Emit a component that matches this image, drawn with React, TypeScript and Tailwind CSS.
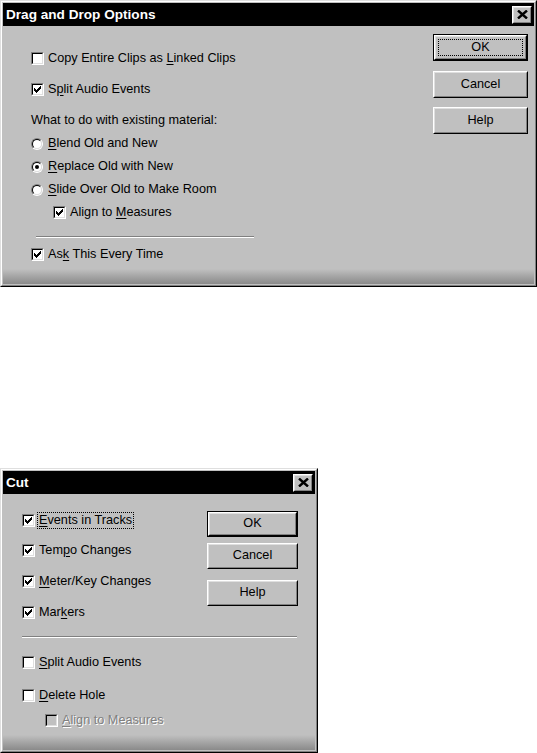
import React from "react";

const font = "font-['Liberation_Sans',Arial,sans-serif]";

const CHECK = ["......X", ".....XX", "X...XXX", "XX.XXX.", "XXXXX..", ".XXX...", "..X...."];

function CheckMark({ color }: { color: string }) {
  return (
    <svg width="9" height="9" viewBox="0 0 9 9" shapeRendering="crispEdges" className="block">
      {CHECK.map((row, y) =>
        row.split("").map((c, x) =>
          c === "X" ? <rect key={`${x}-${y}`} x={x + 1} y={y + 1} width="1" height="1" fill={color} /> : null,
        ),
      )}
    </svg>
  );
}

function Check({ checked, disabled }: { checked?: boolean; disabled?: boolean }) {
  return (
    <span className="block w-[13px] h-[13px] shrink-0 border border-t-[#808080] border-l-[#808080] border-r-white border-b-white">
      <span
        className={`block w-full h-full border border-t-black border-l-black border-r-[#dfdfdf] border-b-[#dfdfdf] ${
          disabled ? "bg-[#c0c0c0]" : "bg-white"
        }`}
      >
        {checked && <CheckMark color="#000" />}
      </span>
    </span>
  );
}

function Radio({ on }: { on?: boolean }) {
  return (
    <span className="flex w-[12px] h-[12px] shrink-0 rounded-full border border-t-[#808080] border-l-[#808080] border-r-white border-b-white">
      <span className="flex flex-1 items-center justify-center rounded-full border border-t-black border-l-black border-r-[#dfdfdf] border-b-[#dfdfdf] bg-white">
        {on && <span className="block w-[4px] h-[4px] rounded-full bg-black" />}
      </span>
    </span>
  );
}

function Label({ t, disabled, focus }: { t: [string, string, string]; disabled?: boolean; focus?: boolean }) {
  return (
    <span
      className={`text-[12.7px] leading-[15px] whitespace-nowrap ${
        disabled ? "text-[#808080] [text-shadow:1px_1px_0_#fff]" : "text-black"
      } ${focus ? "border border-dotted border-black px-[1px] -ml-[2px]" : ""}`}
    >
      {t[0]}
      <span className="underline underline-offset-[1.5px]">{t[1]}</span>
      {t[2]}
    </span>
  );
}

function CheckRow({
  t,
  checked,
  disabled,
  focus,
  className = "",
}: {
  t: [string, string, string];
  checked?: boolean;
  disabled?: boolean;
  focus?: boolean;
  className?: string;
}) {
  return (
    <div className={`flex items-center h-[23px] ${className}`}>
      <Check checked={checked} disabled={disabled} />
      <span className="ml-[4px] flex">
        <Label t={t} disabled={disabled} focus={focus} />
      </span>
    </div>
  );
}

function RadioRow({ t, on }: { t: [string, string, string]; on?: boolean }) {
  return (
    <div className="flex items-center h-[23px]">
      <span className="w-[13px] flex">
        <Radio on={on} />
      </span>
      <span className="ml-[4px] flex">
        <Label t={t} />
      </span>
    </div>
  );
}

function Btn({
  label,
  def,
  focus,
  size,
}: {
  label: string;
  def?: boolean;
  focus?: boolean;
  size: string;
}) {
  return (
    <div className={`${size} shrink-0 flex ${def ? "border border-black" : ""}`}>
      <div className="flex flex-1 border border-t-white border-l-white border-r-black border-b-black">
        <div className="flex flex-1 p-[2px] bg-[#c0c0c0] border border-t-[#dfdfdf] border-l-[#dfdfdf] border-r-[#808080] border-b-[#808080]">
          <div
            className={`flex flex-1 items-center justify-center text-[12.7px] text-black ${
              focus ? "border border-dotted border-black" : ""
            }`}
          >
            {label}
          </div>
        </div>
      </div>
    </div>
  );
}

function CloseBtn() {
  return (
    <div className="w-[20px] h-[18px] flex border border-t-white border-l-white border-r-black border-b-black">
      <div className="flex flex-1 items-center justify-center bg-[#c0c0c0] border border-t-[#dfdfdf] border-l-[#dfdfdf] border-r-[#808080] border-b-[#808080]">
        <svg width="11" height="9" viewBox="0 0 11 9" className="block">
          <path d="M1 0.5 L10 8.5 M10 0.5 L1 8.5" stroke="#000" strokeWidth="2.4" />
        </svg>
      </div>
    </div>
  );
}

function Dialog({
  title,
  className,
  children,
}: {
  title: string;
  className: string;
  children: React.ReactNode;
}) {
  return (
    <div className={`${className} flex border border-t-[#dfdfdf] border-l-[#dfdfdf] border-r-black border-b-black`}>
      <div className="flex flex-1 border border-t-white border-l-white border-r-[#808080] border-b-[#808080]">
        <div className="flex flex-col flex-1 p-[1px] bg-[#c0c0c0]">
          <div className="h-[23px] bg-black flex items-center justify-between pl-[3px] pr-[2px]">
            <span className="text-white font-bold text-[13.6px] leading-none">{title}</span>
            <CloseBtn />
          </div>
          <div className="flex-1 flex flex-col">{children}</div>
          <div className="h-[15px] bg-linear-to-b from-[#c0c0c0] to-[#8a8a8a]" />
        </div>
      </div>
    </div>
  );
}

function Separator({ className }: { className: string }) {
  return <div className={`h-[2px] border-t border-t-[#808080] border-b border-b-white ${className}`} />;
}

export default function App() {
  return (
    <div className={`w-[537px] h-[753px] bg-white flex flex-col ${font}`}>
      <Dialog title="Drag and Drop Options" className="w-[537px] h-[287px]">
        <div className="flex items-start">
          <div className="flex-1 flex flex-col pl-[28px] pt-[21px]">
            <CheckRow t={["Copy Entire Clips as ", "L", "inked Clips"]} />
            <CheckRow t={["S", "p", "lit Audio Events"]} checked className="mt-[8px]" />
            <div className="h-[23px] mt-[8px] flex items-center">
              <Label t={["What to do with existing material:", "", ""]} />
            </div>
            <RadioRow t={["", "B", "lend Old and New"]} />
            <RadioRow t={["", "R", "eplace Old with New"]} on />
            <RadioRow t={["", "S", "lide Over Old to Make Room"]} />
            <CheckRow t={["Align to ", "M", "easures"]} checked className="pl-[22px]" />
            <Separator className="mt-[12px] ml-[5px] w-[218px]" />
            <CheckRow t={["As", "k", " This Every Time"]} checked className="mt-[5px]" />
          </div>
          <div className="flex flex-col mt-[8px] mr-[6px]">
            <Btn label="OK" def focus size="w-[95px] h-[27px]" />
            <div className="mt-[10px]">
              <Btn label="Cancel" size="w-[95px] h-[27px]" />
            </div>
            <div className="mt-[9px]">
              <Btn label="Help" size="w-[95px] h-[27px]" />
            </div>
          </div>
        </div>
      </Dialog>

      <div className="h-[181px] shrink-0" />

      <Dialog title="Cut" className="w-[318px] h-[285px]">
        <div className="flex items-start pt-[15px]">
          <div className="flex-1 flex flex-col pl-[19px]">
            <CheckRow t={["", "E", "vents in Tracks"]} checked focus />
            <CheckRow t={["Tem", "p", "o Changes"]} checked className="mt-[7px]" />
            <CheckRow t={["", "M", "eter/Key Changes"]} checked className="mt-[8px]" />
            <CheckRow t={["Mar", "k", "ers"]} checked className="mt-[8px]" />
          </div>
          <div className="flex flex-col mt-[2px] mr-[17px]">
            <Btn label="OK" def size="w-[91px] h-[26px]" />
            <div className="mt-[6px]">
              <Btn label="Cancel" size="w-[91px] h-[26px]" />
            </div>
            <div className="mt-[11px]">
              <Btn label="Help" size="w-[91px] h-[26px]" />
            </div>
          </div>
        </div>
        <Separator className="mt-[12px] ml-[19px] w-[275px]" />
        <div className="flex flex-col pl-[19px]">
          <CheckRow t={["", "S", "plit Audio Events"]} className="mt-[13px]" />
          <CheckRow t={["", "D", "elete Hole"]} className="mt-[10px]" />
          <CheckRow t={["", "A", "lign to Measures"]} disabled className="mt-[2px] pl-[23px]" />
        </div>
      </Dialog>
    </div>
  );
}
